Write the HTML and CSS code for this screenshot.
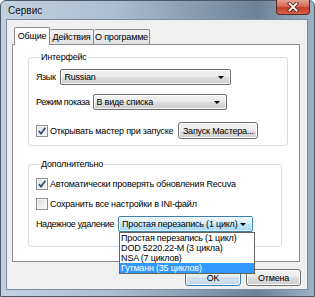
FILE: index.html
```html
<!DOCTYPE html>
<html>
<head>
    <meta charset="utf-8">
    <link rel="stylesheet" href="styles.css">
</head>
<body>
    <div class="window">
        <div class="titlebar">
            <span class="title">Сервис</span>
            <div class="close">
                <svg width="12" height="10" viewBox="0 0 12 10">
                    <path d="M2.5 1.5 L9.5 8.5 M9.5 1.5 L2.5 8.5" stroke="#5a1c12" stroke-width="3.4" stroke-linecap="square"/>
                    <path d="M2.5 1.5 L9.5 8.5 M9.5 1.5 L2.5 8.5" stroke="#ffffff" stroke-width="1.8" stroke-linecap="square"/>
                </svg>
            </div>
        </div>
        <div class="client">
            <div class="tabs">
                <div class="tab active">Общие</div>
                <div class="tab tab-actions">Действия</div>
                <div class="tab tab-about">О программе</div>
            </div>
            <div class="panel">
                <fieldset class="group group-ui">
                    <legend>Интерфейс</legend>
                    <div class="row row-lang">
                        <span class="label">Язык</span>
                        <div class="combo combo-lang">Russian<i class="arrow"></i></div>
                    </div>
                    <div class="row row-view">
                        <span class="label">Режим показа</span>
                        <div class="combo combo-view">В виде списка<i class="arrow"></i></div>
                    </div>
                    <div class="row row-wizard">
                        <label class="check">
                            <span class="box checked">
                                <svg width="10" height="10" viewBox="0 0 10 10"><path d="M1.8 5 L4 7.6 L8.4 1.8" fill="none" stroke="#2d4a78" stroke-width="1.6"/></svg>
                            </span>
                            Открывать мастер при запуске
                        </label>
                        <button class="btn btn-wizard">Запуск Мастера...</button>
                    </div>
                </fieldset>
                <fieldset class="group group-more">
                    <legend>Дополнительно</legend>
                    <label class="check check-update">
                        <span class="box checked">
                            <svg width="10" height="10" viewBox="0 0 10 10"><path d="M1.8 5 L4 7.6 L8.4 1.8" fill="none" stroke="#2d4a78" stroke-width="1.6"/></svg>
                        </span>
                        Автоматически проверять обновления Recuva
                    </label>
                    <label class="check check-ini">
                        <span class="box"></span>
                        Сохранить все настройки в INI-файл
                    </label>
                    <div class="row row-wipe">
                        <span class="label">Надежное удаление</span>
                        <div class="combo combo-wipe open">Простая перезапись (1 цикл)<i class="arrow"></i>
                            <ul class="dropdown">
                                <li>Простая перезапись (1 цикл)</li>
                                <li>DOD 5220.22-M (3 цикла)</li>
                                <li>NSA (7 циклов)</li>
                                <li class="selected">Гутманн (35 циклов)</li>
                            </ul>
                        </div>
                    </div>
                </fieldset>
            </div>
            <div class="buttons">
                <button class="btn btn-ok">OK</button>
                <button class="btn btn-cancel">Отмена</button>
            </div>
        </div>
    </div>
</body>
</html>
```

FILE: styles.css
```css
body {
    margin: 0;
    padding: 0;
    background: #ffffff;
    font-family: 'Liberation Sans', Arial, sans-serif;
    font-size: 9px;
    line-height: 12px;
    letter-spacing: -0.2px;
    white-space: nowrap;
    color: #000000;
}

.window {
    width: 315px;
    height: 297px;
    box-sizing: border-box;
    padding: 0 7px 7px 6px;
    display: flex;
    flex-direction: column;
    border: 1px solid #4a5868;
    border-radius: 6px 6px 0 0;
    background: linear-gradient(90deg, #c3d1df 0%, #aebfd1 35%, #8597aa 65%, #6f8195 82%, #9fb1c4 100%);
}

.titlebar {
    height: 19px;
    display: flex;
    justify-content: space-between;
    align-items: flex-start;
}

.title {
    margin: 4px 0 0 1px;
    font-size: 10px;
    letter-spacing: 0;
    color: #111111;
}

.close {
    width: 34px;
    height: 15px;
    margin: -1px -3px 0 0;
    box-sizing: border-box;
    display: flex;
    justify-content: center;
    align-items: center;
    border: 1px solid #5b2a22;
    border-top: none;
    border-radius: 0 0 4px 4px;
    background: linear-gradient(#e4a08f 0%, #d66a55 45%, #c0402a 55%, #d4624c 100%);
}

.client {
    flex: 1;
    background: #f0f0f0;
    padding: 7px 7px 0 5px;
    box-shadow: 0 0 0 1px #7b8ea2;
}

.tabs {
    display: flex;
    align-items: flex-end;
    height: 17px;
    padding-left: 2px;
    position: relative;
    z-index: 1;
}

.tab {
    height: 15px;
    box-sizing: border-box;
    padding: 0;
    border: 1px solid #898c95;
    border-bottom: none;
    border-left: none;
    border-radius: 2px 2px 0 0;
    background: linear-gradient(#f3f3f3, #e1e1e1);
    line-height: 14px;
    text-align: center;
}

.tab.active {
    width: 36px;
    height: 18px;
    margin-bottom: -1px;
    border-left: 1px solid #898c95;
    background: #ffffff;
    line-height: 17px;
}

.tab-actions {
    width: 44px;
}

.tab-about {
    width: 56px;
}

.panel {
    height: 218px;
    box-sizing: border-box;
    background: #ffffff;
    border: 1px solid #898c95;
    padding: 6px 17px 0 15px;
}

.group {
    margin: 0;
    padding: 0 7px;
    border: 1px solid #d5dfe5;
    border-radius: 3px;
}

.group legend {
    padding: 0 2px;
    margin-left: 3px;
    line-height: 12px;
}

.group-ui {
    padding-bottom: 6px;
}

.group-more {
    margin-top: 12px;
    padding-bottom: 14px;
}

.row {
    display: flex;
    align-items: center;
    gap: 5px;
}

.label {
    letter-spacing: -0.4px;
}

.row-lang {
    margin-top: 6px;
}

.row-view {
    margin-top: 9px;
    gap: 3px;
}

.row-wizard {
    margin-top: 12px;
    justify-content: space-between;
}

.row-wipe {
    margin-top: 6px;
    gap: 4px;
}

.combo {
    position: relative;
    height: 16px;
    box-sizing: border-box;
    padding-left: 3px;
    border: 1px solid #707070;
    border-radius: 2px;
    background: linear-gradient(#f2f2f2 0%, #ebebeb 50%, #dddddd 50%, #cfcfcf 100%);
    box-shadow: inset 0 0 0 1px rgba(255, 255, 255, 0.7);
    line-height: 14px;
}

.combo-lang {
    width: 171px;
}

.combo-view {
    width: 134px;
}

.combo-wipe {
    width: 135px;
}

.combo.open {
    border-color: #3c7fb1;
    background: linear-gradient(#eaf6fd 0%, #d9f0fc 50%, #bee6fd 50%, #a7d9f5 100%);
}

.arrow {
    position: absolute;
    right: 6px;
    top: 6px;
    width: 0;
    height: 0;
    border-left: 3px solid transparent;
    border-right: 3px solid transparent;
    border-top: 3px solid #000000;
}

.dropdown {
    position: absolute;
    left: 0;
    top: 15px;
    width: 134px;
    margin: 0;
    padding: 0;
    list-style: none;
    background: #ffffff;
    border: 1px solid #646464;
    z-index: 2;
}

.dropdown li {
    height: 10px;
    line-height: 10px;
    padding-left: 1px;
}

.dropdown li.selected {
    background: #3399ff;
    color: #ffffff;
}

.check {
    display: flex;
    align-items: center;
    gap: 2px;
}

.check-update {
    margin-top: 8px;
}

.check-ini {
    margin-top: 8px;
}

.box {
    width: 12px;
    height: 12px;
    box-sizing: border-box;
    display: flex;
    justify-content: center;
    align-items: center;
    border: 1px solid #8e8f8f;
    background: linear-gradient(135deg, #dcdcdc, #fbfbfb);
    box-shadow: inset 0 0 0 1px #f4f4f4;
}

.btn {
    height: 17px;
    box-sizing: border-box;
    padding: 0;
    font-family: inherit;
    font-size: 9px;
    letter-spacing: -0.2px;
    color: #000000;
    border: 1px solid #707070;
    border-radius: 3px;
    background: linear-gradient(#f2f2f2 0%, #ebebeb 50%, #dddddd 50%, #cfcfcf 100%);
    box-shadow: inset 0 0 0 1px #fbfbfb;
}

.btn-wizard {
    width: 80px;
    margin-right: 22px;
}

.buttons {
    display: flex;
    justify-content: flex-end;
    gap: 5px;
    margin: 7px -1px 0 0;
}

.btn-ok {
    width: 56px;
    border-color: #3c7fb1;
    background: linear-gradient(#eef5fa 0%, #e2edf5 50%, #d2e1ec 50%, #c6d8e6 100%);
}

.btn-cancel {
    width: 55px;
}
```
